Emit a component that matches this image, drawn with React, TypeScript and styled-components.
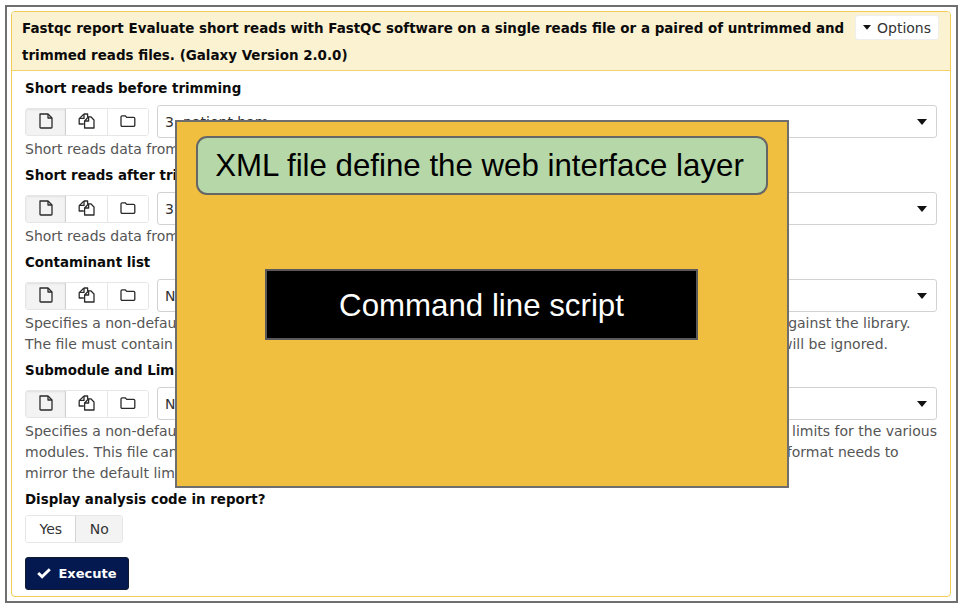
import React from "react";
import styled, { createGlobalStyle } from "styled-components";

const Global = createGlobalStyle`
  html, body { margin: 0; padding: 0; background: #fff; }
  body { font-family: "DejaVu Sans", "Open Sans", sans-serif; font-size: 14px; color: #111; }
`;

const Page = styled.div`
  position: relative;
  width: 966px;
  height: 614px;
  padding: 5px 8px 11px 5px;
  box-sizing: border-box;
  overflow: hidden;
`;

const Frame = styled.div`
  height: 598px;
  border: 2px solid #6f6f6f;
  box-sizing: border-box;
  padding: 4px 5px 4px 4px;
`;

const Card = styled.div`
  height: 586px;
  box-sizing: border-box;
  border: 1px solid #f2cc55;
  border-radius: 4px;
  background: #fff;
`;

const Header = styled.div`
  display: flex;
  justify-content: space-between;
  align-items: flex-start;
  height: 59px;
  box-sizing: border-box;
  padding: 3px 11px 0 10px;
  background: #fbf2d2;
  border-bottom: 1px solid #f2d269;
  border-radius: 3px 3px 0 0;
`;

const Title = styled.div`
  width: 825px;
  font-size: 13.45px;
  font-weight: 700;
  line-height: 27px;
  color: #0b0b0b;
  white-space: nowrap;
`;

const OptionsButton = styled.div`
  display: flex;
  align-items: center;
  justify-content: center;
  gap: 6px;
  height: 25px;
  width: 84px;
  box-sizing: border-box;
  background: #fff;
  border: 1px solid #eeeeee;
  border-radius: 3px;
  font-size: 14px;
  color: #333;
`;

const Body = styled.div`
  padding: 7px 13px 0 13px;
`;

const Label = styled.div<{ $gap?: number }>`
  height: 20px;
  line-height: 22px;
  font-size: 13.4px;
  font-weight: 700;
  color: #0b0b0b;
  margin-top: ${(p) => p.$gap ?? 0}px;
  white-space: nowrap;
`;

const InputRow = styled.div`
  display: flex;
  align-items: center;
  gap: 8px;
  margin-top: 7px;
  height: 33px;
`;

const Group = styled.div`
  display: flex;
  height: 28px;
  width: 124px;
  box-sizing: border-box;
  border: 1px solid #e6e6e6;
  border-radius: 3px;
  overflow: hidden;
  flex: none;
`;

const GroupButton = styled.div<{ $active?: boolean; $w: number }>`
  display: flex;
  align-items: center;
  justify-content: center;
  width: ${(p) => p.$w}px;
  padding-bottom: 2px;
  box-sizing: border-box;
  background: ${(p) => (p.$active ? "#f3f3f3" : "#fff")};
  box-shadow: ${(p) => (p.$active ? "inset 0 1px 2px rgba(0,0,0,.08)" : "none")};
  border-right: 1px solid ${(p) => (p.$active ? "#cfcfcf" : "#e6e6e6")};
  color: #2a2a2a;
  &:last-child { border-right: none; }
`;

const Select = styled.div`
  flex: 1;
  display: flex;
  align-items: center;
  justify-content: space-between;
  height: 33px;
  box-sizing: border-box;
  padding: 0 9px 0 7px;
  border: 1px solid #d2d2d2;
  border-radius: 3px;
  font-size: 14px;
  color: #333;
`;

const Help = styled.div`
  padding-top: 1px;
  font-size: 14px;
  line-height: 21px;
  color: #555;
  white-space: nowrap;
`;

const Toggle = styled.div`
  display: flex;
  width: 98px;
  height: 28px;
  margin-top: 6px;
  box-sizing: border-box;
  border: 1px solid #e6e6e6;
  border-radius: 3px;
  overflow: hidden;
`;

const ToggleItem = styled.div<{ $active?: boolean; $w: number }>`
  display: flex;
  align-items: center;
  justify-content: center;
  width: ${(p) => p.$w}px;
  font-size: 14px;
  color: #333;
  background: ${(p) => (p.$active ? "#f3f3f3" : "#fff")};
  border-left: ${(p) => (p.$active ? "1px solid #d4d4d4" : "none")};
`;

const Execute = styled.div`
  display: flex;
  align-items: center;
  justify-content: center;
  gap: 7px;
  width: 104px;
  height: 33px;
  margin-top: 14px;
  box-sizing: border-box;
  background: #03194f;
  border: 1px solid #111a33;
  border-radius: 3px;
  color: #fff;
  font-size: 13px;
  font-weight: 700;
`;

const Overlay = styled.div`
  position: absolute;
  left: 175px;
  top: 120px;
  width: 614px;
  height: 368px;
  box-sizing: border-box;
  padding: 14px 19px 0 19px;
  background: #f0bf40;
  border: 2px solid #6e6e6e;
  font-family: "Liberation Sans", Arial, sans-serif;
`;

const XmlBox = styled.div`
  display: flex;
  align-items: center;
  justify-content: center;
  width: 572px;
  height: 59px;
  box-sizing: border-box;
  padding: 1px 5px 0 0;
  background: #b6d7a8;
  border: 2px solid #666;
  border-radius: 11px;
  font-size: 31.25px;
  color: #000;
`;

const ScriptBox = styled.div`
  display: flex;
  align-items: center;
  justify-content: center;
  width: 433px;
  height: 71px;
  margin: 74px 0 0 69px;
  box-sizing: border-box;
  padding-top: 2px;
  background: #000;
  border: 2px solid #5a5a5a;
  font-size: 31.25px;
  color: #fff;
`;

const Icon = styled.svg`
  display: block;
  fill: none;
  stroke: currentColor;
  stroke-width: 1.3;
  stroke-linejoin: round;
`;

const Caret = styled.svg<{ $c?: string }>`
  display: block;
  fill: ${(p) => p.$c ?? "#111"};
  flex: none;
`;

const FileIcon = () => (
  <Icon width="16" height="16" viewBox="0 0 16 16">
    <path d="M2 1h8l4 4V14.2a.8.8 0 0 1-.8.8H2.8a.8.8 0 0 1-.8-.8z" />
    <path d="M10 1v4h4" />
  </Icon>
);
const FilesIcon = () => (
  <Icon width="17" height="16" viewBox="0 0 17 16">
    <path d="M6 1L1.2 5.6V11h4.6" />
    <path d="M6 1h3.6v3" />
    <path d="M6 1v4.4H1.4" />
    <path d="M10.6 3.8h2.2L16 7v8H6.6V8z" />
    <path d="M10.6 3.8V8H6.8" />
  </Icon>
);
const FolderIcon = () => (
  <Icon width="16" height="14" viewBox="0 0 16 14">
    <path d="M1 3a1.2 1.2 0 0 1 1.2-1.2h3L6.7 3.4h6.9a1.2 1.2 0 0 1 1.2 1.2v6.6a1.2 1.2 0 0 1-1.2 1.2H2.2A1.2 1.2 0 0 1 1 11.2z" />
  </Icon>
);
const CaretDown = ({ w = 10 }: { w?: number }) => (
  <Caret width={w} height={w * 0.6} viewBox="0 0 10 6">
    <path d="M0 0h10L5 6z" />
  </Caret>
);
const CheckIcon = () => (
  <Caret $c="#fff" width="14" height="11" viewBox="0 0 14 11">
    <path d="M5.1 10.8L0.2 5.9l2-2 2.9 2.9L11.8.2l2 2z" />
  </Caret>
);

const InputLine = ({ value }: { value: string }) => (
  <InputRow>
    <Group>
      <GroupButton $active $w={40}><FileIcon /></GroupButton>
      <GroupButton $w={42}><FilesIcon /></GroupButton>
      <GroupButton $w={40}><FolderIcon /></GroupButton>
    </Group>
    <Select>
      <span>{value}</span>
      <CaretDown />
    </Select>
  </InputRow>
);

export default function App() {
  return (
    <>
      <Global />
      <Page>
        <Frame>
          <Card>
            <Header>
              <Title>
                Fastqc report Evaluate short reads with FastQC software on a single reads file or a paired of untrimmed and
                <br />
                trimmed reads files. (Galaxy Version 2.0.0)
              </Title>
              <OptionsButton>
                <CaretDown w={8} />
                Options
              </OptionsButton>
            </Header>
            <Body>
              <Label>Short reads before trimming</Label>
              <InputLine value="3: patient.bam" />
              <Help>Short reads data from your current history</Help>
              <Label $gap={5}>Short reads after trimming</Label>
              <InputLine value="3: patient.bam" />
              <Help>Short reads data from your current history</Help>
              <Label $gap={5}>Contaminant list</Label>
              <InputLine value="Nothing selected" />
              <Help>
                Specifies a non-default file which contains this list of contaminations to screen overrepresented sequences  against the library.
                <br />
                The file must contain set of named contaminants in the form name[tab]sequence. Lines prefixed with hash will be ignored.
              </Help>
              <Label $gap={5}>Submodule and Limit specifing file</Label>
              <InputLine value="Nothing selected" />
              <Help>
                Specifies a non-default file which contains the set of criteria which will be used to determine the warn / error limits for the various
                <br />
                modules. This file can also be used to selectively remove some modules from their outputs, altogether. This format needs to
                <br />
                mirror the default limits.txt file
              </Help>
              <Label $gap={5}>Display analysis code in report?</Label>
              <Toggle>
                <ToggleItem $w={50}>Yes</ToggleItem>
                <ToggleItem $active $w={46}>No</ToggleItem>
              </Toggle>
              <Execute>
                <CheckIcon />
                Execute
              </Execute>
            </Body>
          </Card>
        </Frame>
        <Overlay>
          <XmlBox>XML file define the web interface layer</XmlBox>
          <ScriptBox>Command line script</ScriptBox>
        </Overlay>
      </Page>
    </>
  );
}
